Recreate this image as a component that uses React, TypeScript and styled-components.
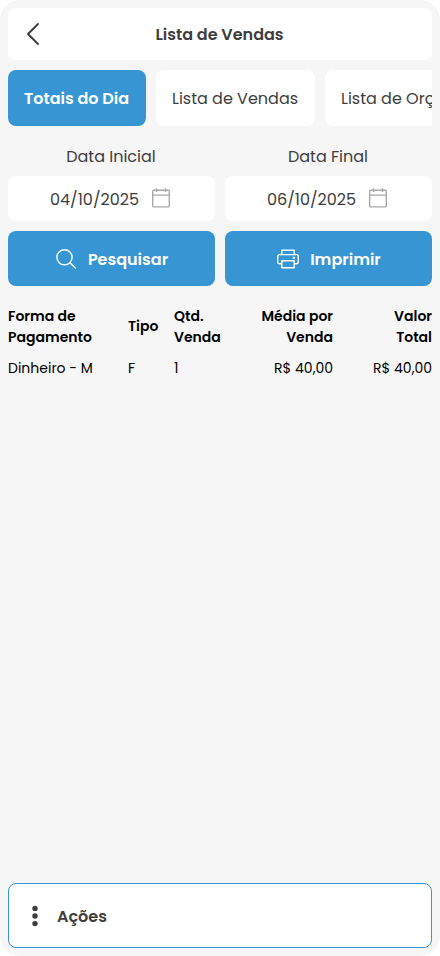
import React from 'react';
import styled, { createGlobalStyle } from 'styled-components';

const GlobalStyle = createGlobalStyle`
  * { box-sizing: border-box; }
  body { margin: 0; background: #fff; }
  button { font: inherit; border: 0; margin: 0; }
`;

const Page = styled.div`
  display: flex;
  flex-direction: column;
  height: 956px;
  padding: 8px;
  overflow: hidden;
  border-radius: 20px;
  background: #f6f6f6;
  color: #3d3d3d;
  font-family: Poppins, Inter, sans-serif;
  font-size: 16px;
`;

const Label = styled.span`
  padding-top: 1px;
  white-space: nowrap;
`;

const Header = styled.header`
  display: grid;
  grid-template-columns: 50px 1fr 51px;
  align-items: center;
  height: 52px;
  flex: none;
  background: #fff;
  border-radius: 8px;
`;

const BackButton = styled.button`
  display: flex;
  justify-content: center;
  padding: 0;
  background: none;
  color: inherit;
`;

const Title = styled.h1`
  margin: 0;
  text-align: center;
  font-size: 16px;
  font-weight: 600;
`;

const Tabs = styled.nav`
  display: flex;
  gap: 10px;
  margin-top: 10px;
  overflow: hidden;
  flex: none;
`;

const Tab = styled.button<{ $active?: boolean; $width: number }>`
  flex: none;
  width: ${p => p.$width}px;
  height: 56px;
  padding: 0 16px;
  text-align: left;
  white-space: nowrap;
  border-radius: 8px;
  background: ${p => (p.$active ? '#3895d3' : '#fff')};
  color: ${p => (p.$active ? '#fff' : '#3d3d3d')};
  font-weight: ${p => (p.$active ? 600 : 400)};
`;

const Filters = styled.section`
  display: grid;
  grid-template-columns: 1fr 1fr;
  gap: 10px;
  margin-top: 20px;
  flex: none;
`;

const Field = styled.label`
  display: flex;
  flex-direction: column;
  text-align: center;
`;

const FieldName = styled.span`
  height: 30px;
  padding-right: 1px;
  line-height: 22px;
`;

const DateBox = styled.span`
  display: flex;
  align-items: center;
  gap: 13px;
  height: 45px;
  padding-left: 42px;
  background: #fff;
  border-radius: 8px;
`;

const ActionButton = styled.button<{ $gap: number }>`
  display: flex;
  align-items: center;
  justify-content: center;
  gap: ${p => p.$gap}px;
  height: 55px;
  padding: 0 0 0 1px;
  border-radius: 8px;
  background: #3895d3;
  color: #fff;
  font-weight: 600;
`;

const Table = styled.div`
  display: grid;
  grid-template-columns: 120px 46px 59px 100px 99px;
  align-items: center;
  margin-top: 20px;
  color: #000;
  font-size: 14px;
  line-height: 21px;
`;

const HeadCell = styled.div<{ $right?: boolean; $single?: boolean }>`
  padding-bottom: ${p => (p.$single ? 1 : 0)}px;
  text-align: ${p => (p.$right ? 'right' : 'left')};
  font-weight: 600;
`;

const Cell = styled.div<{ $right?: boolean }>`
  margin-top: 10px;
  text-align: ${p => (p.$right ? 'right' : 'left')};
`;

const Actions = styled.button`
  display: flex;
  align-items: center;
  gap: 19px;
  height: 65px;
  margin-top: auto;
  padding: 0 0 0 23px;
  flex: none;
  border: 1px solid #3895d3;
  border-radius: 8px;
  background: #fff;
  color: #3d3d3d;
  font-weight: 600;
`;

const BackIcon = () => (
  <svg width="16" height="24" viewBox="0 0 16 24" fill="none" stroke="currentColor" strokeWidth="1.9" strokeLinecap="round" strokeLinejoin="round">
    <path d="M13 2 3 12l10 10" />
  </svg>
);

const CalendarIcon = () => (
  <svg width="18" height="21" viewBox="0 0 18 21" fill="none" stroke="#a9a9a9" strokeWidth="1.4">
    <rect x=".7" y="2.3" width="16.6" height="16.6" rx=".8" />
    <path d="M.7 7.1h16.6M4.5 .2v3.8M13.5 .2v3.8" />
  </svg>
);

const SearchIcon = () => (
  <svg width="20" height="20" viewBox="0 0 20 20" fill="none" stroke="#fff" strokeWidth="1.4" strokeLinecap="round">
    <circle cx="8.5" cy="8.3" r="7.6" />
    <path d="m14 13.8 5.3 5.3" />
  </svg>
);

const PrinterIcon = () => (
  <svg width="22" height="20" viewBox="0 0 22 20" fill="none" stroke="#fff" strokeWidth="1.4" strokeLinejoin="round">
    <path d="M4.8 5.6V1.2h12.4v4.4" />
    <path d="M4.8 14.7H2.6A1.9 1.9 0 0 1 .7 12.8V7.5a1.9 1.9 0 0 1 1.9-1.9h16.8a1.9 1.9 0 0 1 1.9 1.9v5.3a1.9 1.9 0 0 1-1.9 1.9h-2.2" />
    <rect x="4.8" y="11.7" width="12.4" height="7" />
    <circle cx="16.8" cy="8.9" r="1.15" fill="#fff" stroke="none" />
  </svg>
);

const DotsIcon = () => (
  <svg width="6" height="22" viewBox="0 0 6 22" fill="#3d3d3d">
    <circle cx="3" cy="3.4" r="2.7" />
    <circle cx="3" cy="11" r="2.7" />
    <circle cx="3" cy="18.6" r="2.7" />
  </svg>
);

export default function App() {
  return (
    <>
      <GlobalStyle />
      <Page>
        <Header>
          <BackButton aria-label="Voltar"><BackIcon /></BackButton>
          <Title>Lista de Vendas</Title>
        </Header>

        <Tabs>
          <Tab $active $width={138}>Totais do Dia</Tab>
          <Tab $width={159}>Lista de Vendas</Tab>
          <Tab $width={206}>Lista de Orçamentos</Tab>
        </Tabs>

        <Filters>
          <Field>
            <FieldName>Data Inicial</FieldName>
            <DateBox><Label>04/10/2025</Label><CalendarIcon /></DateBox>
          </Field>
          <Field>
            <FieldName>Data Final</FieldName>
            <DateBox><Label>06/10/2025</Label><CalendarIcon /></DateBox>
          </Field>
          <ActionButton $gap={12}><SearchIcon /><Label>Pesquisar</Label></ActionButton>
          <ActionButton $gap={11}><PrinterIcon /><Label>Imprimir</Label></ActionButton>
        </Filters>

        <Table>
          <HeadCell>Forma de<br />Pagamento</HeadCell>
          <HeadCell $single>Tipo</HeadCell>
          <HeadCell>Qtd.<br />Venda</HeadCell>
          <HeadCell $right>Média por<br />Venda</HeadCell>
          <HeadCell $right>Valor<br />Total</HeadCell>
          <Cell>Dinheiro - M</Cell>
          <Cell>F</Cell>
          <Cell>1</Cell>
          <Cell $right>R$ 40,00</Cell>
          <Cell $right>R$ 40,00</Cell>
        </Table>

        <Actions><DotsIcon /><Label>Ações</Label></Actions>
      </Page>
    </>
  );
}
